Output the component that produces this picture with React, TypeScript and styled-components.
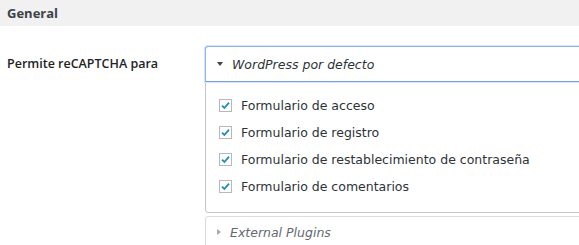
import React from 'react';
import styled, { createGlobalStyle } from 'styled-components';

const GlobalStyle = createGlobalStyle`
  body {
    margin: 0;
    background: #fff;
    font-family: "Open Sans", "Noto Sans", sans-serif;
    color: #23282d;
    overflow: hidden;
  }
`;

const Page = styled.div`
  width: 579px;
  overflow: hidden;
`;

const SectionHeader = styled.div`
  height: 26px;
  background: #f1f1f1;
  padding: 0 7px;
  display: flex;
  align-items: center;
  font-size: 13px;
  font-weight: 700;
  color: #3c434a;
`;

const Row = styled.div`
  display: flex;
  padding-top: 20px;
`;

const Label = styled.div`
  width: 198px;
  flex: none;
  padding: 9px 0 0 7px;
  font-size: 12.5px;
  font-weight: 600;
  color: #1d2327;
`;

const Field = styled.div`
  flex: none;
  width: 420px;
  display: flex;
  flex-direction: column;
  gap: 3px;
`;

const Panel = styled.div<{ $open: boolean }>`
  border: 1px solid ${(p) => (p.$open ? '#c3c4c7' : '#dcdcde')};
  border-radius: 3px;
  background: #fff;
`;

const PanelHead = styled.div<{ $open: boolean }>`
  display: flex;
  align-items: center;
  gap: 9px;
  height: ${(p) => (p.$open ? 34 : 30)}px;
  padding-left: 11px;
  font-family: "DejaVu Sans", Verdana, sans-serif;
  font-size: 12.5px;
  font-style: italic;
  color: ${(p) => (p.$open ? '#2c3338' : '#646970')};
  ${(p) =>
    p.$open
      ? `
    margin: -1px -1px 0 -1px;
    border: 1px solid #8fb5e6;
    border-bottom-color: #72a5e8;
    border-radius: 3px 3px 0 0;
    box-shadow: 0 0 0 1px #d6e4f6;
  `
      : ''}
`;

const Caret = styled.span<{ $open: boolean }>`
  width: 0;
  height: 0;
  ${(p) =>
    p.$open
      ? `
    border-left: 3.5px solid transparent;
    border-right: 3.5px solid transparent;
    border-top: 4px solid #3c434a;
  `
      : `
    border-top: 3.5px solid transparent;
    border-bottom: 3.5px solid transparent;
    border-left: 4px solid #a7aaad;
  `}
`;

const List = styled.div`
  display: flex;
  flex-direction: column;
  gap: 10px;
  padding: 15px 0 17px 13px;
`;

const Item = styled.label`
  display: flex;
  align-items: center;
  gap: 9px;
  height: 17px;
  font-family: "DejaVu Sans", Verdana, sans-serif;
  font-size: 12.5px;
  color: #2c3338;
`;

const Box = styled.span`
  width: 13px;
  height: 13px;
  box-sizing: border-box;
  border: 1px solid #b4b9be;
  background: #fff;
  display: flex;
  align-items: center;
  justify-content: center;
`;

const Check = () => (
  <svg width="11" height="11" viewBox="0 0 11 11">
    <path d="M2 5.6 L4.4 8 L9 2.6" fill="none" stroke="#1e8cbe" strokeWidth="1.8" />
  </svg>
);

const items = [
  'Formulario de acceso',
  'Formulario de registro',
  'Formulario de restablecimiento de contraseña',
  'Formulario de comentarios',
];

export default function App() {
  return (
    <Page>
      <GlobalStyle />
      <SectionHeader>General</SectionHeader>
      <Row>
        <Label>Permite reCAPTCHA para</Label>
        <Field>
          <Panel $open>
            <PanelHead $open>
              <Caret $open />
              WordPress por defecto
            </PanelHead>
            <List>
              {items.map((t) => (
                <Item key={t}>
                  <Box>
                    <Check />
                  </Box>
                  {t}
                </Item>
              ))}
            </List>
          </Panel>
          <Panel $open={false}>
            <PanelHead $open={false}>
              <Caret $open={false} />
              External Plugins
            </PanelHead>
          </Panel>
        </Field>
      </Row>
    </Page>
  );
}
